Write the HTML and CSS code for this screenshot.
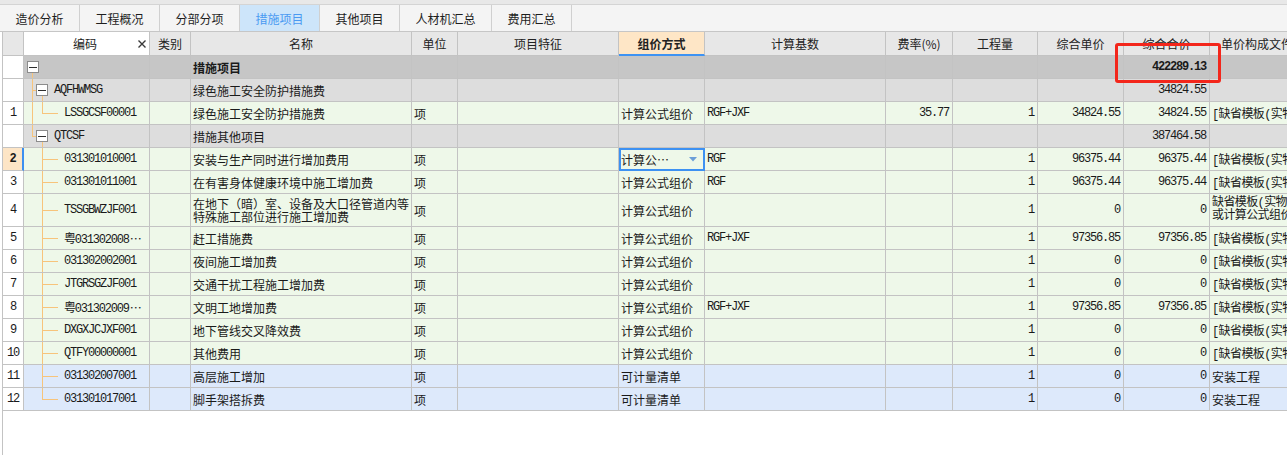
FILE: index.html
```html
<!DOCTYPE html>
<html lang="zh-CN">
<head>
<meta charset="utf-8">
<title>措施项目</title>
<link rel="stylesheet" href="styles.css">
</head>
<body>
<div class="topstrip"></div>
<div class="tabbar">
  <div class="tab">造价分析</div>
  <div class="tab">工程概况</div>
  <div class="tab">分部分项</div>
  <div class="tab active">措施项目</div>
  <div class="tab">其他项目</div>
  <div class="tab wide">人材机汇总</div>
  <div class="tab">费用汇总</div>
</div>
<div class="grid">
  <div class="row head">
    <div class="c"></div>
    <div class="c hcode"><span></span><span>编码</span><span class="x"><svg width="8" height="8" viewBox="0 0 8 8"><path d="M0.5 0.5L7.5 7.5M7.5 0.5L0.5 7.5" stroke="#3a3a3a" stroke-width="1.4"/></svg></span></div>
    <div class="c">类别</div>
    <div class="c">名称</div>
    <div class="c">单位</div>
    <div class="c">项目特征</div>
    <div class="c hsel">组价方式</div>
    <div class="c">计算基数</div>
    <div class="c">费率(%)</div>
    <div class="c">工程量</div>
    <div class="c">综合单价</div>
    <div class="c">综合合价</div>
    <div class="c">单价构成文件</div>
  </div>

  <div class="row lv0">
    <div class="c no"></div>
    <div class="c tc t-root"><span class="box b0"></span></div>
    <div class="c"></div>
    <div class="c b">措施项目</div>
    <div class="c"></div><div class="c"></div><div class="c"></div><div class="c"></div>
    <div class="c"></div><div class="c"></div><div class="c"></div>
    <div class="c n m b">422289.13</div>
    <div class="c"></div>
  </div>

  <div class="row lv1">
    <div class="c no"></div>
    <div class="c tc t-g1 m"><span class="box b1"></span><span class="gt">AQFHWMSG</span></div>
    <div class="c"></div>
    <div class="c">绿色施工安全防护措施费</div>
    <div class="c"></div><div class="c"></div><div class="c"></div><div class="c"></div>
    <div class="c"></div><div class="c"></div><div class="c"></div>
    <div class="c n m">34824.55</div>
    <div class="c"></div>
  </div>

  <div class="row item">
    <div class="c no m">1</div>
    <div class="c tc t-l1 m">LSSGCSF00001</div>
    <div class="c"></div>
    <div class="c">绿色施工安全防护措施费</div>
    <div class="c">项</div>
    <div class="c"></div>
    <div class="c">计算公式组价</div>
    <div class="c m">RGF+JXF</div>
    <div class="c n m">35.77</div>
    <div class="c n m">1</div>
    <div class="c n m">34824.55</div>
    <div class="c n m">34824.55</div>
    <div class="c f">[缺省模板(实物量或计算公式组价)]</div>
  </div>

  <div class="row lv1">
    <div class="c no"></div>
    <div class="c tc t-g1z m"><span class="box b1"></span><span class="gt">QTCSF</span></div>
    <div class="c"></div>
    <div class="c">措施其他项目</div>
    <div class="c"></div><div class="c"></div><div class="c"></div><div class="c"></div>
    <div class="c"></div><div class="c"></div><div class="c"></div>
    <div class="c n m">387464.58</div>
    <div class="c"></div>
  </div>

  <div class="row item">
    <div class="c no m cur">2</div>
    <div class="c tc t-l2 m">031301010001</div>
    <div class="c"></div>
    <div class="c">安装与生产同时进行增加费用</div>
    <div class="c">项</div>
    <div class="c"></div>
    <div class="c sel"><span>计算公…</span><svg class="dd" width="8" height="5" viewBox="0 0 8 5"><path d="M0 0H8L4 4.5Z" fill="#6c9fd8"/></svg></div>
    <div class="c m">RGF</div>
    <div class="c"></div>
    <div class="c n m">1</div>
    <div class="c n m">96375.44</div>
    <div class="c n m">96375.44</div>
    <div class="c f">[缺省模板(实物量或计算公式组价)]</div>
  </div>

  <div class="row item">
    <div class="c no m">3</div>
    <div class="c tc t-l2 m">031301011001</div>
    <div class="c"></div>
    <div class="c">在有害身体健康环境中施工增加费</div>
    <div class="c">项</div>
    <div class="c"></div>
    <div class="c">计算公式组价</div>
    <div class="c m">RGF</div>
    <div class="c"></div>
    <div class="c n m">1</div>
    <div class="c n m">96375.44</div>
    <div class="c n m">96375.44</div>
    <div class="c f">[缺省模板(实物量或计算公式组价)]</div>
  </div>

  <div class="row item tall">
    <div class="c no m">4</div>
    <div class="c tc t-l2 m">TSSGBWZJF001</div>
    <div class="c"></div>
    <div class="c wrap">在地下（暗）室、设备及大口径管道内等<br>特殊施工部位进行施工增加费</div>
    <div class="c">项</div>
    <div class="c"></div>
    <div class="c">计算公式组价</div>
    <div class="c"></div>
    <div class="c"></div>
    <div class="c n m">1</div>
    <div class="c n m">0</div>
    <div class="c n m">0</div>
    <div class="c f wrap">缺省模板(实物量<br>或计算公式组价)</div>
  </div>

  <div class="row item">
    <div class="c no m">5</div>
    <div class="c tc t-l2 m">粤031302008<span class="ell">…</span></div>
    <div class="c"></div>
    <div class="c">赶工措施费</div>
    <div class="c">项</div>
    <div class="c"></div>
    <div class="c">计算公式组价</div>
    <div class="c m">RGF+JXF</div>
    <div class="c"></div>
    <div class="c n m">1</div>
    <div class="c n m">97356.85</div>
    <div class="c n m">97356.85</div>
    <div class="c f">[缺省模板(实物量或计算公式组价)]</div>
  </div>

  <div class="row item">
    <div class="c no m">6</div>
    <div class="c tc t-l2 m">031302002001</div>
    <div class="c"></div>
    <div class="c">夜间施工增加费</div>
    <div class="c">项</div>
    <div class="c"></div>
    <div class="c">计算公式组价</div>
    <div class="c"></div>
    <div class="c"></div>
    <div class="c n m">1</div>
    <div class="c n m">0</div>
    <div class="c n m">0</div>
    <div class="c f">[缺省模板(实物量或计算公式组价)]</div>
  </div>

  <div class="row item">
    <div class="c no m">7</div>
    <div class="c tc t-l2 m">JTGRSGZJF001</div>
    <div class="c"></div>
    <div class="c">交通干扰工程施工增加费</div>
    <div class="c">项</div>
    <div class="c"></div>
    <div class="c">计算公式组价</div>
    <div class="c"></div>
    <div class="c"></div>
    <div class="c n m">1</div>
    <div class="c n m">0</div>
    <div class="c n m">0</div>
    <div class="c f">[缺省模板(实物量或计算公式组价)]</div>
  </div>

  <div class="row item">
    <div class="c no m">8</div>
    <div class="c tc t-l2 m">粤031302009<span class="ell">…</span></div>
    <div class="c"></div>
    <div class="c">文明工地增加费</div>
    <div class="c">项</div>
    <div class="c"></div>
    <div class="c">计算公式组价</div>
    <div class="c m">RGF+JXF</div>
    <div class="c"></div>
    <div class="c n m">1</div>
    <div class="c n m">97356.85</div>
    <div class="c n m">97356.85</div>
    <div class="c f">[缺省模板(实物量或计算公式组价)]</div>
  </div>

  <div class="row item">
    <div class="c no m">9</div>
    <div class="c tc t-l2 m">DXGXJCJXF001</div>
    <div class="c"></div>
    <div class="c">地下管线交叉降效费</div>
    <div class="c">项</div>
    <div class="c"></div>
    <div class="c">计算公式组价</div>
    <div class="c"></div>
    <div class="c"></div>
    <div class="c n m">1</div>
    <div class="c n m">0</div>
    <div class="c n m">0</div>
    <div class="c f">[缺省模板(实物量或计算公式组价)]</div>
  </div>

  <div class="row item">
    <div class="c no m">10</div>
    <div class="c tc t-l2 m">QTFY00000001</div>
    <div class="c"></div>
    <div class="c">其他费用</div>
    <div class="c">项</div>
    <div class="c"></div>
    <div class="c">计算公式组价</div>
    <div class="c"></div>
    <div class="c"></div>
    <div class="c n m">1</div>
    <div class="c n m">0</div>
    <div class="c n m">0</div>
    <div class="c f">[缺省模板(实物量或计算公式组价)]</div>
  </div>

  <div class="row bill">
    <div class="c no m">11</div>
    <div class="c tc t-l2 m">031302007001</div>
    <div class="c"></div>
    <div class="c">高层施工增加</div>
    <div class="c">项</div>
    <div class="c"></div>
    <div class="c">可计量清单</div>
    <div class="c"></div>
    <div class="c"></div>
    <div class="c n m">1</div>
    <div class="c n m">0</div>
    <div class="c n m">0</div>
    <div class="c">安装工程</div>
  </div>

  <div class="row bill">
    <div class="c no m">12</div>
    <div class="c tc t-l2z m">031301017001</div>
    <div class="c"></div>
    <div class="c">脚手架搭拆费</div>
    <div class="c">项</div>
    <div class="c"></div>
    <div class="c">可计量清单</div>
    <div class="c"></div>
    <div class="c"></div>
    <div class="c n m">1</div>
    <div class="c n m">0</div>
    <div class="c n m">0</div>
    <div class="c">安装工程</div>
  </div>
</div>
<div class="mark"></div>
</body>
</html>
```

FILE: styles.css
```css
html, body {
  margin: 0;
  padding: 0;
}
body {
  width: 1287px;
  height: 455px;
  overflow: hidden;
  position: relative;
  background: #ffffff;
  color: #1a1a1a;
  font-family: "Noto Sans CJK SC", "Noto Sans", sans-serif;
  font-size: 12px;
}

.topstrip {
  height: 4px;
  background: #e8e8e8;
}
.tabbar {
  display: flex;
  height: 26px;
  background: #f4f4f4;
  border-top: 1px solid #d4d4d4;
  border-bottom: 1px solid #c6c6c6;
}
.tab {
  box-sizing: border-box;
  width: 80px;
  border-right: 1px solid #d0d0d0;
  text-align: center;
  line-height: 26px;
  padding-top: 1px;
  color: #1e1e1e;
}
.tab.wide {
  width: 92px;
}
.tab.active {
  background: #cde5fa;
  color: #4a9af2;
}

.grid {
  margin-left: 2px;
  border-left: 1px solid #c3c3c3;
  width: max-content;
  height: 423px;
}

.row {
  display: grid;
  grid-template-columns: 21px 126px 41px 221px 46px 161px 86px 181px 67px 85px 86px 86px 95px;
  height: 23px;
}
.row.tall {
  height: 33px;
}
.row.lv0 { background: #c6c6c6; }
.row.lv1 { background: #dddddd; }
.row.item { background: #eef8e9; }
.row.bill { background: #dde9fb; }

.c {
  box-sizing: border-box;
  border-right: 1px solid #c3c3c3;
  border-bottom: 1px solid #c3c3c3;
  display: flex;
  align-items: center;
  padding: 0 2px;
  overflow: hidden;
  white-space: nowrap;
  min-width: 0;
}
.c.wrap {
  line-height: 13px;
}
.c.b { font-weight: bold; }
.c.f {
  font-family: "Liberation Mono", "Noto Sans CJK SC", monospace;
  letter-spacing: -0.6px;
}

.m {
  font-family: "Liberation Mono", "Noto Sans CJK SC", monospace;
  letter-spacing: -1.2px;
}
.ell {
  font-family: "Noto Sans CJK SC", sans-serif;
  letter-spacing: 0;
  margin-left: 1px;
}
.c.n {
  justify-content: flex-end;
  padding-right: 3px;
}
.c.no {
  background: #ffffff;
  justify-content: center;
  padding: 0;
}
.c.no.cur {
  background: #fde5c6;
  font-weight: bold;
  border-right: 2px solid #3d8ff0;
}

/* header */
.row.head {
  height: 24px;
  background: #e7e7e7;
}
.row.head .c {
  justify-content: center;
  color: #222222;
}
.row.head .c.hcode {
  background: #ffffff;
  display: grid;
  grid-template-columns: 1fr auto 1fr;
  align-items: center;
  padding: 0 3px 0 0;
}
.hcode .x {
  justify-self: end;
  display: flex;
}
.row.head .c.hsel {
  background: #fee6c6;
  font-weight: bold;
  border-bottom: 2px solid #3e93f3;
}

/* selected editing cell */
.c.sel {
  justify-content: space-between;
  padding-right: 7px;
  outline: 2px solid #3d91f2;
  outline-offset: -2px;
}
.dd { flex: none; }

/* tree */
.tc {
  --L: linear-gradient(#f7c47b, #f7c47b);
  padding: 0;
}
.box {
  flex: none;
  width: 12px;
  height: 12px;
  box-sizing: border-box;
  border: 1px solid #8c8c8c;
  background: linear-gradient(#2e2e2e, #2e2e2e) no-repeat center / 8px 1px, #ffffff;
}
.box.b0 { margin-left: 3px; }
.box.b1 { margin-left: 12px; }
.gt { margin-left: 6px; }

.t-root {
  background: var(--L) no-repeat 8px 100% / 1px 50%;
}
.t-g1 {
  background:
    var(--L) no-repeat 8px 0 / 1px 100%,
    var(--L) no-repeat 8px 50% / 4px 1px,
    var(--L) no-repeat 18px 100% / 1px 50%;
}
.t-g1z {
  background:
    var(--L) no-repeat 8px 0 / 1px 50%,
    var(--L) no-repeat 8px 50% / 4px 1px,
    var(--L) no-repeat 18px 100% / 1px 50%;
}
.t-l1 {
  padding-left: 40px;
  background:
    var(--L) no-repeat 8px 0 / 1px 100%,
    var(--L) no-repeat 18px 0 / 1px 50%,
    var(--L) no-repeat 18px 50% / 16px 1px;
}
.t-l2 {
  padding-left: 40px;
  background:
    var(--L) no-repeat 18px 0 / 1px 100%,
    var(--L) no-repeat 18px 50% / 16px 1px;
}
.t-l2z {
  padding-left: 40px;
  background:
    var(--L) no-repeat 18px 0 / 1px 50%,
    var(--L) no-repeat 18px 50% / 16px 1px;
}

/* annotation */
.mark {
  position: absolute;
  left: 1115px;
  top: 43px;
  width: 106px;
  height: 40px;
  box-sizing: border-box;
  border: 3px solid #f3261b;
  border-radius: 3px;
}
```
